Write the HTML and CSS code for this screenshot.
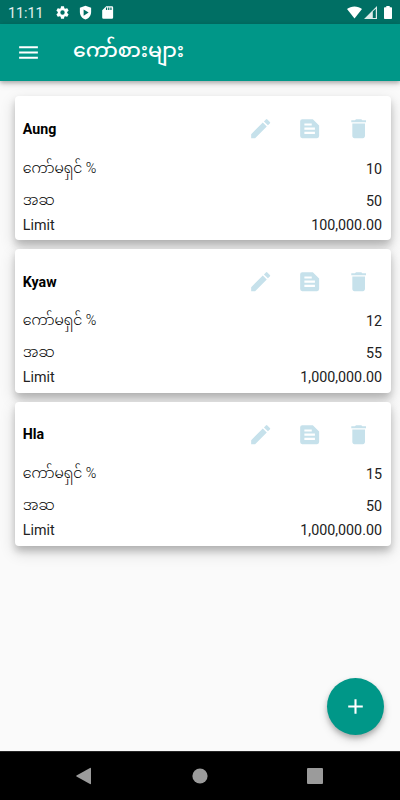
FILE: index.html
```html
<!DOCTYPE html>
<html lang="my">
<head>
    <meta charset="UTF-8">
    <meta name="viewport" content="width=device-width, initial-scale=1.0">
    <title>ကော်စားများ</title>
    <link rel="stylesheet" href="styles.css">
</head>
<body>
    <!-- shared icons -->
    <svg class="sprite" aria-hidden="true">
        <symbol id="edit" viewBox="0 0 24 24"><path d="M3 17.25V21h3.75L17.81 9.94l-3.75-3.75L3 17.25zM20.71 7.04a1 1 0 0 0 0-1.41l-2.34-2.34a1 1 0 0 0-1.41 0l-1.83 1.83 3.75 3.75 1.83-1.83z"/></symbol>
        <symbol id="article" viewBox="0 0 24 24"><path fill-rule="evenodd" d="M15 3H5a2 2 0 0 0-2 2v14a2 2 0 0 0 2 2h14a2 2 0 0 0 2-2V9l-6-6zM7 7h7v2H7V7zm10 10H7v-2h10v2zm0-4H7v-2h10v2z"/></symbol>
        <symbol id="delete" viewBox="0 0 24 24"><path d="M6 19c0 1.1.9 2 2 2h8c1.1 0 2-.9 2-2V7H6v12zM19 4h-3.5l-1-1h-5l-1 1H5v2h14V4z"/></symbol>
    </svg>

    <div class="status-bar">
        <span class="clock">11:11</span>
        <div class="status-icons">
            <svg width="15" height="15" viewBox="0 0 24 24"><path fill-rule="evenodd" d="M19.43 12.98c.04-.32.07-.64.07-.98s-.03-.66-.07-.98l2.11-1.65c.19-.15.24-.42.12-.64l-2-3.46c-.12-.22-.39-.3-.61-.22l-2.49 1c-.52-.4-1.08-.73-1.69-.98l-.38-2.65A.49.49 0 0 0 14 2h-4c-.25 0-.46.18-.49.42l-.38 2.65c-.61.25-1.17.59-1.69.98l-2.49-1c-.23-.09-.49 0-.61.22l-2 3.46c-.13.22-.07.49.12.64l2.11 1.65c-.04.32-.07.65-.07.98s.03.66.07.98l-2.11 1.65c-.19.15-.24.42-.12.64l2 3.46c.12.22.39.3.61.22l2.49-1c.52.4 1.08.73 1.69.98l.38 2.65c.03.24.24.42.49.42h4c.25 0 .46-.18.49-.42l.38-2.65c.61-.25 1.17-.59 1.69-.98l2.49 1c.23.09.49 0 .61-.22l2-3.46c.12-.22.07-.49-.12-.64l-2.11-1.65zM12 15.5a3.5 3.5 0 1 1 0-7 3.5 3.5 0 0 1 0 7z"/></svg>
            <svg width="15" height="15" viewBox="0 0 24 24"><path fill-rule="evenodd" d="M12 1L3 4.5V11c0 5.6 3.8 10.7 9 12 5.2-1.3 9-6.4 9-12V4.5L12 1zM9 7l8 5-8 5V7z"/></svg>
            <svg width="15" height="15" viewBox="0 0 24 24"><path fill-rule="evenodd" d="M19 2h-9L3.5 8.5V20a2 2 0 0 0 2 2H19a2 2 0 0 0 2-2V4a2 2 0 0 0-2-2zm-7.5 6h-2V4h2v4zm3.5 0h-2V4h2v4zm3.5 0h-2V4h2v4z"/></svg>
        </div>
        <div class="system-icons">
            <svg width="15" height="13" viewBox="0 0 15 13"><path d="M0 3C4-.5 11-.5 15 3L7.5 12.5z"/></svg>
            <svg class="signal" width="13" height="13" viewBox="0 0 13 13"><path fill-rule="evenodd" d="M0 13L13 0v13zM8.8 5.5V11.9h3V2.7z"/></svg>
            <svg class="battery" width="8" height="13" viewBox="0 0 8 13"><path d="M2.3 0h3.4v1.2H7.2a.8.8 0 0 1 .8.8v10.2a.8.8 0 0 1-.8.8H.8a.8.8 0 0 1-.8-.8V2a.8.8 0 0 1 .8-.8h1.5z"/></svg>
        </div>
    </div>

    <header class="app-bar">
        <svg class="menu" viewBox="0 0 24 24"><path d="M3 18h18v-2H3v2zm0-5h18v-2H3v2zm0-7v2h18V6H3z"/></svg>
        <h1 class="title">ကော်စားများ</h1>
    </header>

    <main class="content">
        <section class="card">
            <div class="card-header">
                <h2 class="name">Aung</h2>
                <div class="actions">
                    <svg><use href="#edit"/></svg>
                    <svg><use href="#article"/></svg>
                    <svg><use href="#delete"/></svg>
                </div>
            </div>
            <div class="row"><span class="label">ကော်မရှင် %</span><span>10</span></div>
            <div class="row"><span class="label">အဆ</span><span>50</span></div>
            <div class="row limit"><span>Limit</span><span>100,000.00</span></div>
        </section>

        <section class="card">
            <div class="card-header">
                <h2 class="name">Kyaw</h2>
                <div class="actions">
                    <svg><use href="#edit"/></svg>
                    <svg><use href="#article"/></svg>
                    <svg><use href="#delete"/></svg>
                </div>
            </div>
            <div class="row"><span class="label">ကော်မရှင် %</span><span>12</span></div>
            <div class="row"><span class="label">အဆ</span><span>55</span></div>
            <div class="row limit"><span>Limit</span><span>1,000,000.00</span></div>
        </section>

        <section class="card">
            <div class="card-header">
                <h2 class="name">Hla</h2>
                <div class="actions">
                    <svg><use href="#edit"/></svg>
                    <svg><use href="#article"/></svg>
                    <svg><use href="#delete"/></svg>
                </div>
            </div>
            <div class="row"><span class="label">ကော်မရှင် %</span><span>15</span></div>
            <div class="row"><span class="label">အဆ</span><span>50</span></div>
            <div class="row limit"><span>Limit</span><span>1,000,000.00</span></div>
        </section>

        <button class="fab" aria-label="Add">
            <svg viewBox="0 0 24 24"><path d="M19 13h-6v6h-2v-6H5v-2h6V5h2v6h6v2z"/></svg>
        </button>
    </main>

    <nav class="nav-bar">
        <svg viewBox="0 0 20 20"><path d="M1.5 9.5L15 2a.7.7 0 0 1 1 .6v14.8a.7.7 0 0 1-1 .6L1.5 10.5a.6.6 0 0 1 0-1z"/></svg>
        <svg viewBox="0 0 20 20"><circle cx="10" cy="10" r="7.6"/></svg>
        <svg viewBox="0 0 20 20"><rect x="2" y="2" width="16" height="16" rx="1"/></svg>
    </nav>
</body>
</html>
```
FILE: styles.css
```css
* {
    box-sizing: border-box;
}

body {
    margin: 0;
    height: 100vh;
    display: flex;
    flex-direction: column;
    overflow: hidden;
    background: #fafafa;
    color: #222;
    font-family: Roboto, "Noto Sans Myanmar", "Noto Sans", sans-serif;
    font-size: 14.3px;
}

svg {
    display: block;
    fill: currentColor;
}

.sprite {
    display: none;
}

.status-bar {
    height: 24px;
    flex-shrink: 0;
    display: flex;
    align-items: center;
    padding: 1px 8px 0;
    background: #006f64;
    color: #fff;
}

.clock {
    width: 47px;
    font-size: 14.3px;
    color: #e4f0ef;
}

.status-icons {
    display: flex;
    gap: 7.5px;
}

.system-icons {
    display: flex;
    gap: 1.5px;
    margin-left: auto;
}

.signal {
    color: #dcebe9;
}

.battery {
    margin-left: 6px;
}

.app-bar {
    height: 57px;
    flex-shrink: 0;
    display: flex;
    align-items: center;
    padding-left: 16px;
    background: #009788;
    color: #fff;
    box-shadow: 0 2px 4px rgba(0, 0, 0, 0.25), 0 3px 8px rgba(0, 0, 0, 0.1);
    z-index: 1;
}

.menu {
    width: 25px;
    height: 25px;
}

.title {
    margin: 0 0 6px 32px;
    font-size: 20.5px;
    font-weight: 500;
    line-height: 30px;
}

.content {
    position: relative;
    flex: 1;
    display: flex;
    flex-direction: column;
    gap: 8.4px;
    padding: 15px 9px 0 14.5px;
}

.card {
    height: 144.4px;
    padding: 9px 9px 0 8.3px;
    background: #fff;
    border-radius: 4px;
    box-shadow: 0 5px 7px rgba(0, 0, 0, 0.18), 0 6px 16px rgba(0, 0, 0, 0.16);
}

.card-header {
    height: 47.5px;
    display: flex;
    align-items: center;
    justify-content: space-between;
}

.name {
    margin: 0;
    font-size: 14.2px;
    font-weight: 700;
    color: #000;
}

.actions {
    display: flex;
    gap: 23.6px;
    margin: 0 10.5px 0 0;
    color: #c6e1eb;
}

.actions svg {
    width: 25.3px;
    height: 25.3px;
}

.row {
    height: 32px;
    display: flex;
    align-items: center;
    justify-content: space-between;
    line-height: 16px;
}

.label {
    margin-bottom: 2px;
    font-weight: 300;
    color: #000;
}

.limit {
    height: 16px;
}

.fab {
    position: absolute;
    right: 16px;
    bottom: 16px;
    width: 57px;
    height: 57px;
    padding: 16px;
    border: none;
    border-radius: 50%;
    background: #009788;
    color: #fff;
    box-shadow: 0 3px 5px rgba(0, 0, 0, 0.22), 0 5px 10px rgba(0, 0, 0, 0.14);
}

.nav-bar {
    height: 49px;
    flex-shrink: 0;
    display: flex;
    align-items: center;
    justify-content: space-between;
    padding: 0 75px;
    background: #000;
    color: #9b9b9b;
    border-top: 1px solid #262626;
}

.nav-bar svg {
    width: 20px;
    height: 20px;
}
```
